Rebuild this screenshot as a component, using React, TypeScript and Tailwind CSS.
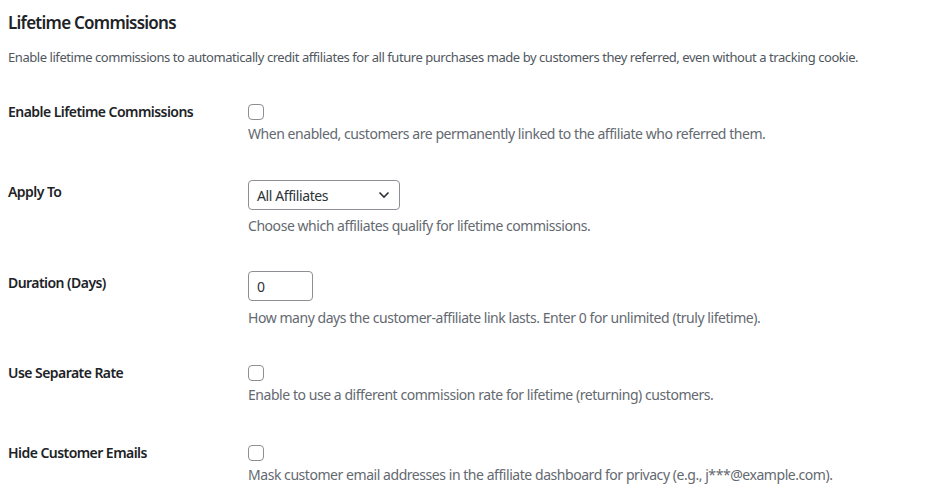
import React from 'react';

const font = { fontFamily: '"Noto Sans", "Open Sans", sans-serif' };

function Checkbox() {
  return <span className="mb-1 block w-4 h-4 rounded-[4px] border border-[#8c8f94] bg-white" />;
}

function Row({ label, top, children, desc }: { label: string; top: string; children: React.ReactNode; desc: string }) {
  return (
    <div className="flex">
      <div className="w-[240px] shrink-0 pt-5 text-[14px] leading-5 font-semibold tracking-[-0.55px] text-[#1d2327]">{label}</div>
      <div className={`flex-1 ${top}`}>
        {children}
        <p className="text-[14px] leading-5 tracking-[-0.45px] text-[#646970]">{desc}</p>
      </div>
    </div>
  );
}

export default function App() {
  return (
    <div className="min-h-[500px] bg-white px-2 pt-[11px]" style={font}>
      <h2 className="text-[17px] leading-6 font-semibold tracking-[-0.75px] text-[#1d2327]">Lifetime Commissions</h2>
      <p className="mt-[12px] text-[13px] leading-5 tracking-[-0.44px] whitespace-nowrap text-[#50575e]">
        Enable lifetime commissions to automatically credit affiliates for all future purchases made by customers they referred, even without a tracking cookie.
      </p>
      <div className="mt-[15px]">
        <Row label="Enable Lifetime Commissions" top="pt-[22px] pb-[18px]" desc="When enabled, customers are permanently linked to the affiliate who referred them.">
          <Checkbox />
        </Row>
        <Row label="Apply To" top="pt-[18px] pb-[17px]" desc="Choose which affiliates qualify for lifetime commissions.">
          <div className="mb-[6px] flex h-[30px] w-[152px] items-center justify-between rounded-[4px] border border-[#8c8f94] bg-white pl-2 pr-[9px] text-[14px] tracking-[-0.4px] text-[#2c3338]">
            <span>All Affiliates</span>
            <svg width="12" height="8" viewBox="0 0 12 8" fill="none">
              <path d="M1.5 1.5 L6 6 L10.5 1.5" stroke="#2c3338" strokeWidth="1.6" />
            </svg>
          </div>
        </Row>
        <Row label="Duration (Days)" top="pt-[18px] pb-[15px]" desc="How many days the customer-affiliate link lasts. Enter 0 for unlimited (truly lifetime).">
          <div className="mb-[7px] flex h-[30px] w-[65px] items-center rounded-[4px] border border-[#8c8f94] bg-white px-2 text-[14px] text-[#2c3338]">
            0
          </div>
        </Row>
        <Row label="Use Separate Rate" top="pt-[22px] pb-[18px]" desc="Enable to use a different commission rate for lifetime (returning) customers.">
          <Checkbox />
        </Row>
        <Row label="Hide Customer Emails" top="pt-[22px] pb-[18px]" desc="Mask customer email addresses in the affiliate dashboard for privacy (e.g., j***@example.com).">
          <Checkbox />
        </Row>
      </div>
    </div>
  );
}
